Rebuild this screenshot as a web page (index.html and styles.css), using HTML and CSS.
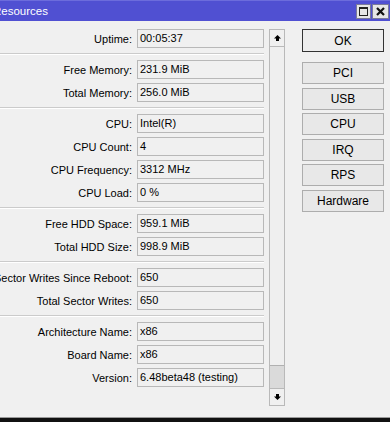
FILE: index.html
```html
<!DOCTYPE html>
<html>
<head>
	<title>Resources</title>
	<meta charset="utf-8" />
	<link rel="stylesheet" href="styles.css">
</head>
<body>
	<div class="window">
		<div class="titlebar">
			<span class="title">Resources</span>
			<div class="win-btns">
				<span class="wbtn">
					<svg width="9" height="9" viewBox="0 0 9 9"><rect x="0.5" y="0.5" width="8" height="8" fill="none" stroke="#222" stroke-width="1" /><rect x="0" y="0" width="9" height="2" fill="#222" /></svg>
				</span>
				<span class="wbtn">
					<svg width="9" height="9" viewBox="0 0 9 9"><path d="M1 1 L8 8 M8 1 L1 8" stroke="#111" stroke-width="2.2" /></svg>
				</span>
			</div>
		</div>
		<div class="content">
			<div class="form">
				<div class="group">
					<div class="row"><div class="label"><span>Uptime:</span></div><div class="field">00:05:37</div></div>
				</div>
				<div class="sep"></div>
				<div class="group">
					<div class="row"><div class="label"><span>Free Memory:</span></div><div class="field">231.9 MiB</div></div>
					<div class="row"><div class="label"><span>Total Memory:</span></div><div class="field">256.0 MiB</div></div>
				</div>
				<div class="sep"></div>
				<div class="group">
					<div class="row"><div class="label"><span>CPU:</span></div><div class="field">Intel(R)</div></div>
					<div class="row"><div class="label"><span>CPU Count:</span></div><div class="field">4</div></div>
					<div class="row"><div class="label"><span>CPU Frequency:</span></div><div class="field">3312 MHz</div></div>
					<div class="row"><div class="label"><span>CPU Load:</span></div><div class="field">0 %</div></div>
				</div>
				<div class="sep"></div>
				<div class="group">
					<div class="row"><div class="label"><span>Free HDD Space:</span></div><div class="field">959.1 MiB</div></div>
					<div class="row"><div class="label"><span>Total HDD Size:</span></div><div class="field">998.9 MiB</div></div>
				</div>
				<div class="sep"></div>
				<div class="group">
					<div class="row"><div class="label"><span>Sector Writes Since Reboot:</span></div><div class="field">650</div></div>
					<div class="row"><div class="label"><span>Total Sector Writes:</span></div><div class="field">650</div></div>
				</div>
				<div class="sep"></div>
				<div class="group">
					<div class="row"><div class="label"><span>Architecture Name:</span></div><div class="field">x86</div></div>
					<div class="row"><div class="label"><span>Board Name:</span></div><div class="field">x86</div></div>
					<div class="row"><div class="label"><span>Version:</span></div><div class="field">6.48beta48 (testing)</div></div>
				</div>
			</div>
			<div class="scrollbar">
				<div class="sb-btn">
					<svg width="7" height="6" viewBox="0 0 7 6"><polygon points="3.5,0 7,3.5 0,3.5" fill="#000" /><rect x="2" y="3" width="3" height="3" fill="#000" /></svg>
				</div>
				<div class="sb-track"><div class="sb-thumb"></div></div>
				<div class="sb-btn">
					<svg width="7" height="6" viewBox="0 0 7 6"><polygon points="3.5,6 7,2.5 0,2.5" fill="#000" /><rect x="2" y="0" width="3" height="3" fill="#000" /></svg>
				</div>
			</div>
			<div class="buttons">
				<div class="btn default">OK</div>
				<div class="btn-list">
					<div class="btn">PCI</div>
					<div class="btn">USB</div>
					<div class="btn">CPU</div>
					<div class="btn">IRQ</div>
					<div class="btn">RPS</div>
					<div class="btn">Hardware</div>
				</div>
			</div>
		</div>
	</div>
</body>
</html>
```

FILE: styles.css
```css
html {
	background-color: #111;
}

body {
	margin: 0;
	font-family: "Liberation Sans", Arial, sans-serif;
	font-size: 11px;
	color: #000;
}

.window {
	width: 390px;
	height: 417px;
	background-color: #f0f0f0;
	border-bottom: 1px solid #9a9a9a;
	overflow: hidden;
}

.titlebar {
	height: 21px;
	background-color: #5050d2;
	border-top: 1px solid #6c6cdc;
	box-sizing: border-box;
	display: flex;
	align-items: center;
	justify-content: space-between;
}

	.titlebar .title {
		margin-left: -7px;
		color: #fff;
		font-size: 11.5px;
	}

.win-btns {
	display: flex;
	gap: 1px;
	margin-right: 1px;
}

	.win-btns .wbtn {
		width: 13px;
		height: 13px;
		background-color: #e6e6e6;
		border: 1px solid #7a7a9a;
		display: flex;
		align-items: center;
		justify-content: center;
	}

	.win-btns .wbtn + .wbtn {
		width: 15px;
	}

.content {
	display: flex;
	padding-top: 8px;
}

.form {
	width: 264px;
	display: flex;
	flex-direction: column;
}

.group {
	display: flex;
	flex-direction: column;
	gap: 4px;
}

.row {
	display: flex;
	height: 19px;
	align-items: center;
}

	.row .label {
		width: 132px;
		margin-right: 5px;
		display: flex;
		justify-content: flex-end;
		white-space: nowrap;
	}

	.row .field {
		width: 127px;
		height: 19px;
		box-sizing: border-box;
		border: 1px solid #b8b8b8;
		background-color: #f0f0f0;
		padding-left: 2px;
		line-height: 17px;
		white-space: nowrap;
		overflow: hidden;
	}

.sep {
	margin: 5px 0;
	border-top: 1px solid #cbcbcb;
	border-bottom: 1px solid #fff;
}

.scrollbar {
	width: 16px;
	height: 377px;
	margin-left: 5px;
	display: flex;
	flex-direction: column;
	box-sizing: border-box;
	border: 1px solid #b9b9b9;
}

	.scrollbar .sb-btn {
		height: 16px;
		display: flex;
		align-items: center;
		justify-content: center;
		background-color: #f0f0f0;
	}

	.scrollbar .sb-track {
		flex: 1;
		display: flex;
		flex-direction: column;
		justify-content: flex-end;
		border-top: 1px solid #b9b9b9;
		border-bottom: 1px solid #b9b9b9;
		background-color: #efefef;
	}

	.scrollbar .sb-thumb {
		height: 22px;
		background-color: #dadada;
		border-top: 1px solid #b0b0b0;
	}

.buttons {
	margin-left: 17px;
	width: 82px;
	display: flex;
	flex-direction: column;
}

.btn {
	height: 22px;
	box-sizing: border-box;
	border: 1px solid #adadad;
	background-color: #e8e8e8;
	display: flex;
	align-items: center;
	justify-content: center;
	font-size: 12px;
}

	.btn.default {
		height: 23px;
		border-color: #333;
		background-color: #ededed;
	}

.btn-list {
	margin-top: 10px;
	display: flex;
	flex-direction: column;
	gap: 3.5px;
}
```
